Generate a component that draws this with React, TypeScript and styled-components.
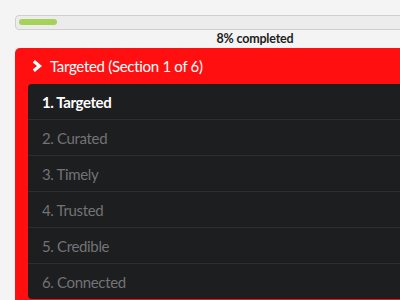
import React from "react";
import styled, { createGlobalStyle } from "styled-components";

const Global = createGlobalStyle`
  html, body { margin: 0; padding: 0; background: #f4f4f4; overflow: hidden; }
  body { font-family: Lato, "Open Sans", sans-serif; }
`;

const Page = styled.div`
  width: 480px;
  padding: 15px 0 0 15px;
  box-sizing: content-box;
`;

const Track = styled.div`
  height: 15px;
  box-sizing: border-box;
  border: 1px solid #cfcfcf;
  border-radius: 4px;
  background: #ececec;
  padding: 3px;
`;

const Fill = styled.div`
  height: 6px;
  border-radius: 3px;
  background: #a6d25a;
`;

const Caption = styled.div`
  height: 18px;
  line-height: 17px;
  text-align: center;
  font-size: 12.5px;
  font-weight: 700;
  letter-spacing: -0.2px;
  color: #1e1e1e;
`;

const Panel = styled.div`
  background: #ff0f0f;
  border-radius: 5px 5px 0 0;
  padding: 0 0 0 13px;
  height: 260px;
`;

const Header = styled.div`
  height: 36px;
  display: flex;
  align-items: center;
  gap: 8px;
  padding-left: 4px;
  color: #fff;
  font-size: 15px;
  letter-spacing: -0.3px;
  font-weight: 400;
`;

const List = styled.div`
  background: #1d1e20;
  border-radius: 4px;
  height: 215px;
  overflow: hidden;
`;

const Item = styled.div<{ $active?: boolean }>`
  height: 36px;
  box-sizing: border-box;
  display: flex;
  align-items: center;
  padding-left: 14px;
  font-size: 15px;
  letter-spacing: ${(p) => (p.$active ? "-0.4px" : "-0.35px")};
  color: ${(p) => (p.$active ? "#ffffff" : "#727375")};
  font-weight: ${(p) => (p.$active ? 700 : 400)};
  border-bottom: 1px solid #2d2e30;
  &:last-child { border-bottom: none; }
`;

const items = ["Targeted", "Curated", "Timely", "Trusted", "Credible", "Connected"];

export default function App() {
  return (
    <>
      <Global />
      <Page>
        <Track>
          <Fill style={{ width: "38px" }} />
        </Track>
        <Caption>8% completed</Caption>
        <Panel>
          <Header>
            <svg width="10" height="12" viewBox="0 0 10 12">
              <path d="M1.8 1.2 L7.5 6 L1.8 10.8" fill="none" stroke="#fff" strokeWidth="3.2" strokeLinejoin="miter" />
            </svg>
            <span>Targeted (Section 1 of 6)</span>
          </Header>
          <List>
            {items.map((t, i) => (
              <Item key={t} $active={i === 0}>
                {i + 1}. {t}
              </Item>
            ))}
          </List>
        </Panel>
      </Page>
    </>
  );
}
